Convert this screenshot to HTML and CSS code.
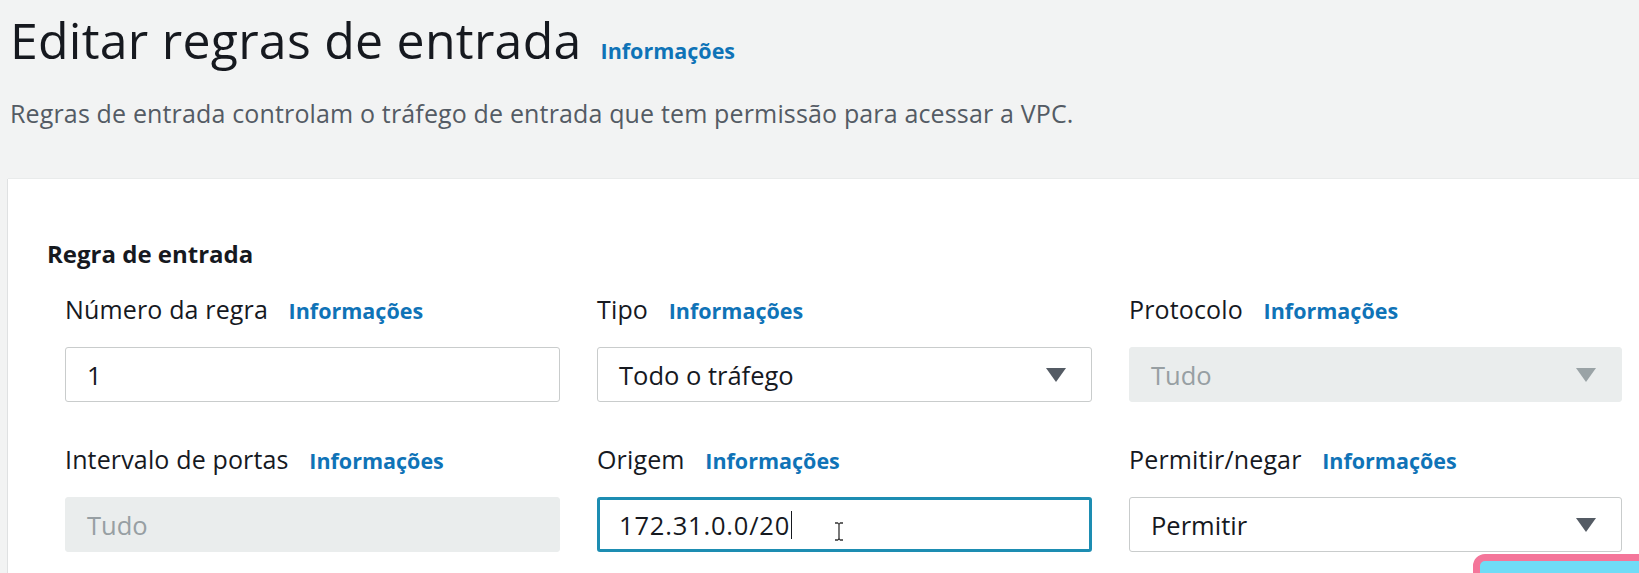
FILE: index.html
```html
<!DOCTYPE html>
<html lang="pt-BR">
<head>
<meta charset="utf-8">
<title>Editar regras de entrada</title>
<link rel="stylesheet" href="styles.css">
</head>
<body>
<div class="page">
  <header class="head">
    <div class="title-row">
      <h1 class="title">Editar regras de entrada</h1>
      <a class="info info-title" href="#">Informações</a>
    </div>
    <p class="subtitle">Regras de entrada controlam o tráfego de entrada que tem permissão para acessar a VPC.</p>
  </header>

  <section class="card">
    <h2 class="card-heading">Regra de entrada</h2>
    <div class="grid">
      <div class="field">
        <div class="label">Número da regra <a class="info" href="#">Informações</a></div>
        <div class="control"><span class="value">1</span></div>
      </div>
      <div class="field">
        <div class="label">Tipo <a class="info" href="#">Informações</a></div>
        <div class="control select"><span class="value">Todo o tráfego</span><span class="caret-down"></span></div>
      </div>
      <div class="field">
        <div class="label">Protocolo <a class="info" href="#">Informações</a></div>
        <div class="control select disabled"><span class="value">Tudo</span><span class="caret-down"></span></div>
      </div>
      <div class="field">
        <div class="label">Intervalo de portas <a class="info" href="#">Informações</a></div>
        <div class="control disabled"><span class="value">Tudo</span></div>
      </div>
      <div class="field">
        <div class="label">Origem <a class="info" href="#">Informações</a></div>
        <div class="control focused"><span class="value typing">172.31.0.0/20</span>
          <svg class="ibeam" width="10" height="19" viewBox="0 0 10 19"><path d="M1 1h3.2M5.8 1H9M5 2v15M1 18h3.2M5.8 18H9M4.2 1.5q.8.3.8 1.2M5.8 1.5q-.8.3-.8 1.2M4.2 17.5q.8-.3.8-1.2M5.8 17.5q-.8-.3-.8-1.2" fill="none" stroke="#333" stroke-width="1.3"/></svg>
        </div>
      </div>
      <div class="field">
        <div class="label">Permitir/negar <a class="info" href="#">Informações</a></div>
        <div class="control select"><span class="value">Permitir</span><span class="caret-down"></span></div>
      </div>
    </div>
    <div class="highlight-btn"></div>
  </section>
</div>
</body>
</html>
```

FILE: styles.css
```css
* { box-sizing: border-box; }
html, body { margin: 0; padding: 0; }
body {
  background: #f2f3f3;
  font-family: "Open Sans", "Noto Sans", "Liberation Sans", sans-serif;
  color: #16191f;
  overflow: hidden;
  height: 573px;
}
.page { position: relative; }
.head { padding: 8px 0 0 10px; }
.title-row { display: flex; align-items: baseline; gap: 19px; height: 64px; }
.title {
  margin: 0;
  font-weight: 400;
  font-size: 50px;
  line-height: 64px;
  letter-spacing: 0.25px;
  color: #16191f;
}
.info {
  color: #0f73b7;
  font-weight: 700;
  text-decoration: none;
  font-size: 21.5px;
  line-height: 1;
  margin-left: 14px;
  letter-spacing: 0;
}
.info-title { margin-left: 0; }
.subtitle {
  margin: 26px 0 0 0;
  font-size: 25px;
  line-height: 30px;
  color: #545b64;
  letter-spacing: 0.15px;
}
.card {
  position: relative;
  overflow: hidden;
  margin: 51px 0 0 8px;
  background: #fff;
  box-shadow: -1px 0 0 #dfe1e2, 0 -1px 0 #e9ebeb;
  padding: 60px 0 21px 39px;
}
.card-heading {
  margin: 0;
  font-size: 24px;
  font-weight: 700;
  line-height: 30px;
  color: #16191f;
}
.grid {
  margin: 25px 0 0 18px;
  display: grid;
  grid-template-columns: 495px 495px 493px;
  column-gap: 37px;
  row-gap: 42px;
}
.label {
  font-size: 25px;
  line-height: 30px;
  height: 30px;
  color: #16191f;
  margin-bottom: 23px;
  white-space: nowrap;
  letter-spacing: 0.15px;
}
.control {
  position: relative;
  height: 55px;
  border: 1px solid #c9cccc;
  border-radius: 3px;
  background: #fff;
  display: flex;
  align-items: center;
  padding: 0 22px 0 21px;
  font-size: 25.5px;
  color: #16191f;
}
.control.disabled {
  background: #eaeded;
  border-color: #eaeded;
  color: #979fa3;
}
.control.focused {
  border: 3px solid #1d8db2;
  padding-left: 19px;
}
.select { justify-content: space-between; }
.caret-down {
  width: 0; height: 0;
  border-left: 10px solid transparent;
  border-right: 10px solid transparent;
  border-top: 14px solid #545b64;
  margin-right: 3px;
}
.disabled .caret-down { border-top-color: #9aa3a6; }
.typing {
  border-right: 1.5px solid #16191f;
  padding-right: 1px;
  line-height: 28px;
  letter-spacing: 0.8px;
}
.ibeam { position: absolute; left: 234px; top: 22px; }
.highlight-btn {
  position: absolute;
  left: 1465px;
  top: 375px;
  width: 220px;
  height: 60px;
  border: 7px solid #f4769a;
  border-radius: 12px;
  background: #6fdcf6;
}
```
